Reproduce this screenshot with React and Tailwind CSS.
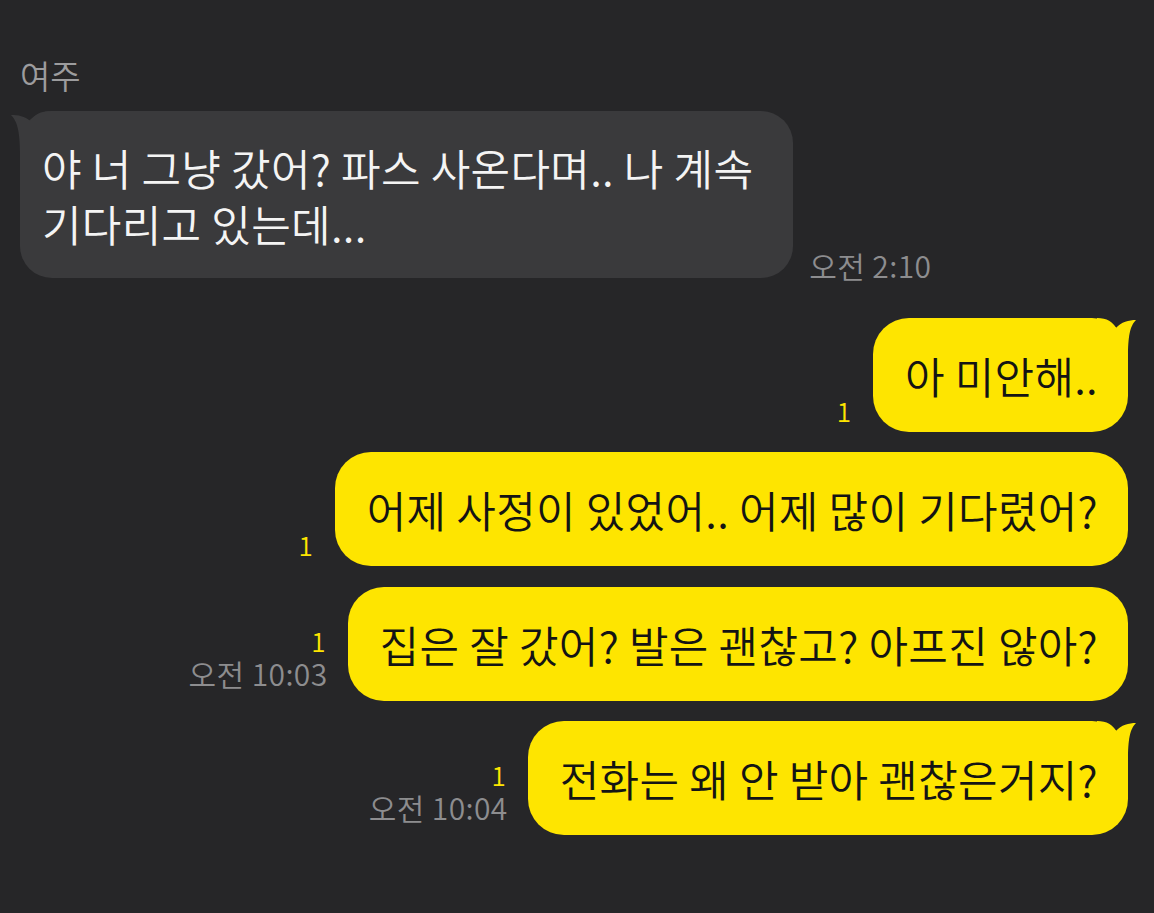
import React from "react";

function YellowTail() {
  return (
    <svg className="absolute right-[-11px] top-[-2px]" width="42" height="42" viewBox="0 0 42 42">
      <path d="M0 2 C10 2 16 6 19 12 C24 6 32 4 39 4 C33 10 31 20 31 42 L0 42 Z" fill="#fee500" />
    </svg>
  );
}

function GrayTail() {
  return (
    <svg className="absolute left-[-10px] top-0" width="42" height="42" viewBox="0 0 42 42">
      <path d="M42 0 C30 0 24 4 20 10 C15 5 8 4 1 4 C7 10 10 20 10 42 L42 42 Z" fill="#3a3a3c" />
    </svg>
  );
}

function Mine({ text, time, tail, mt }) {
  return (
    <div className={`flex items-end justify-end mr-[26px] ${mt}`}>
      <div className={`flex flex-col items-end gap-[2px] mr-[20px] ${time ? "pb-[11px]" : "pb-[8px]"}`}>
        <span className="text-[26px] leading-[27px] text-[#fee500] pr-[2px]">1</span>
        {time && <span className="text-[30px] leading-[34px] text-[#8d8d8f] tracking-[0.4px]">{time}</span>}
      </div>
      <div className="relative bg-[#fee500] rounded-[36px] pl-[32px] pr-[30px] py-[29px] text-[43px] leading-[56px] tracking-[0.3px] text-[#141414] whitespace-nowrap">
        {tail && <YellowTail />}
        <span className="relative">{text}</span>
      </div>
    </div>
  );
}

export default function App() {
  return (
    <div className="w-full h-[913px] bg-[#262628] overflow-hidden font-[350]" style={{ fontFamily: '"Noto Sans CJK KR", "Noto Sans", sans-serif' }}>
      <div className="pt-[53px] pl-[20px] text-[33px] leading-[44px] text-[#9c9c9e]">여주</div>
      <div className="flex items-end mt-[14px] ml-[20px]">
        <div className="relative bg-[#3a3a3c] rounded-[32px] pl-[22px] pr-[40px] pt-[28px] pb-[27px] text-[43px] leading-[56px] tracking-[0.3px] text-[#f4f4f4] whitespace-nowrap">
          <GrayTail />
          <span className="relative">야 너 그냥 갔어? 파스 사온다며.. 나 계속<br />기다리고 있는데...</span>
        </div>
        <span className="ml-[16px] mb-[-4px] text-[30px] leading-[34px] text-[#8d8d8f] tracking-[0.4px]">오전 2:10</span>
      </div>
      <Mine text="아 미안해.." tail mt="mt-[40px]" />
      <Mine text="어제 사정이 있었어.. 어제 많이 기다렸어?" mt="mt-[20px]" />
      <Mine text="집은 잘 갔어? 발은 괜찮고? 아프진 않아?" time="오전 10:03" mt="mt-[21px]" />
      <Mine text="전화는 왜 안 받아 괜찮은거지?" time="오전 10:04" tail mt="mt-[20px]" />
    </div>
  );
}
